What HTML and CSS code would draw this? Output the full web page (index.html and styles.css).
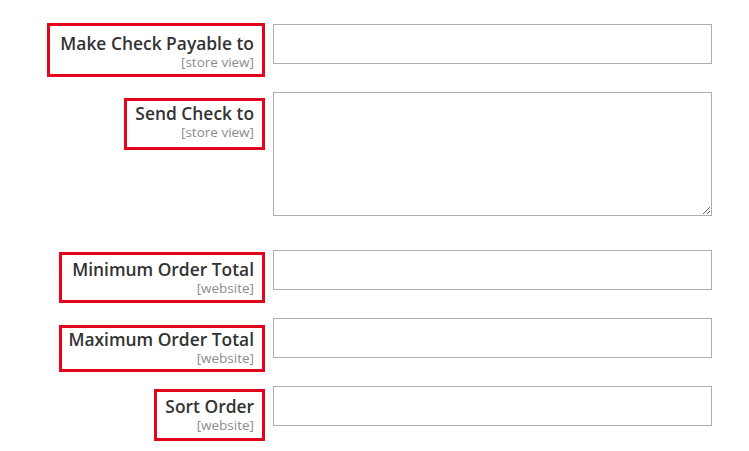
FILE: index.html
```html
<!DOCTYPE html>
<html lang="en">
<head>
  <meta charset="UTF-8">
  <meta name="viewport" content="width=device-width, initial-scale=1.0">
  <title>Check / Money Order</title>
  <link rel="stylesheet" href="styles.css">
</head>
<body>

  <div class="config-form">
    <div class="field">
      <div class="label-col">
        <label class="label label-first">
          <span class="label-title">Make Check Payable to</span>
          <span class="label-scope">[store view]</span>
        </label>
      </div>
      <input class="control" type="text">
    </div>

    <div class="field field-text">
      <div class="label-col">
        <label class="label label-send">
          <span class="label-title">Send Check to</span>
          <span class="label-scope">[store view]</span>
        </label>
      </div>
      <textarea class="control control-area"></textarea>
    </div>

    <div class="field">
      <div class="label-col">
        <label class="label label-min">
          <span class="label-title">Minimum Order Total</span>
          <span class="label-scope">[website]</span>
        </label>
      </div>
      <input class="control" type="text">
    </div>

    <div class="field">
      <div class="label-col">
        <label class="label label-max">
          <span class="label-title">Maximum Order Total</span>
          <span class="label-scope">[website]</span>
        </label>
      </div>
      <input class="control" type="text">
    </div>

    <div class="field">
      <div class="label-col">
        <label class="label label-sort">
          <span class="label-title">Sort Order</span>
          <span class="label-scope">[website]</span>
        </label>
      </div>
      <input class="control" type="text">
    </div>
  </div>

</body>
</html>
```

FILE: styles.css
```css
* {
  margin: 0;
  padding: 0;
  box-sizing: border-box;
}

body, html {
  height: 100%;
  background-color: #fff;
  font-family: 'Open Sans', 'Liberation Sans', sans-serif;
  color: #303030;
  overflow: hidden;
}

.config-form {
  padding-top: 24px;
}

.field {
  display: flex;
  align-items: flex-start;
  gap: 8px;
  height: 54px;
  margin-bottom: 14px;
}

.field-text {
  height: 124px;
  margin-bottom: 34px;
}

.label-col {
  width: 265px;
  display: flex;
  justify-content: flex-end;
}

/* red highlight round each label (hand drawn, so every box differs a bit) */
.label {
  display: flex;
  flex-direction: column;
  align-items: flex-end;
  border: 3px solid #e3051b;
  padding-right: 8px;
}

.label-first {
  margin-top: -1px;
  padding: 6px 8px 3px 10px;
}

.label-send {
  margin-top: 6px;
  padding: 1px 8px 6px 8px;
}

.label-min {
  margin-top: 2px;
  padding: 3px 8px 3px 10px;
}

.label-max {
  margin-top: 7px;
  padding: 0 8px 2px 6px;
}

.label-sort {
  margin-top: 3px;
  padding: 3px 8px 4px 8px;
}

.label-title {
  font-size: 17.4px;
  font-weight: 600;
  line-height: 22px;
  color: #333;
}

.label-scope {
  font-size: 13.5px;
  line-height: 17px;
  color: #8c8c8c;
}

.control {
  width: 439px;
  height: 40px;
  border: 1px solid #adadad;
  background: #fff;
  font-family: inherit;
  font-size: 14px;
  padding: 0 10px;
  outline: none;
}

.control-area {
  height: 124px;
  resize: vertical;
  padding: 8px 10px;
}
```
